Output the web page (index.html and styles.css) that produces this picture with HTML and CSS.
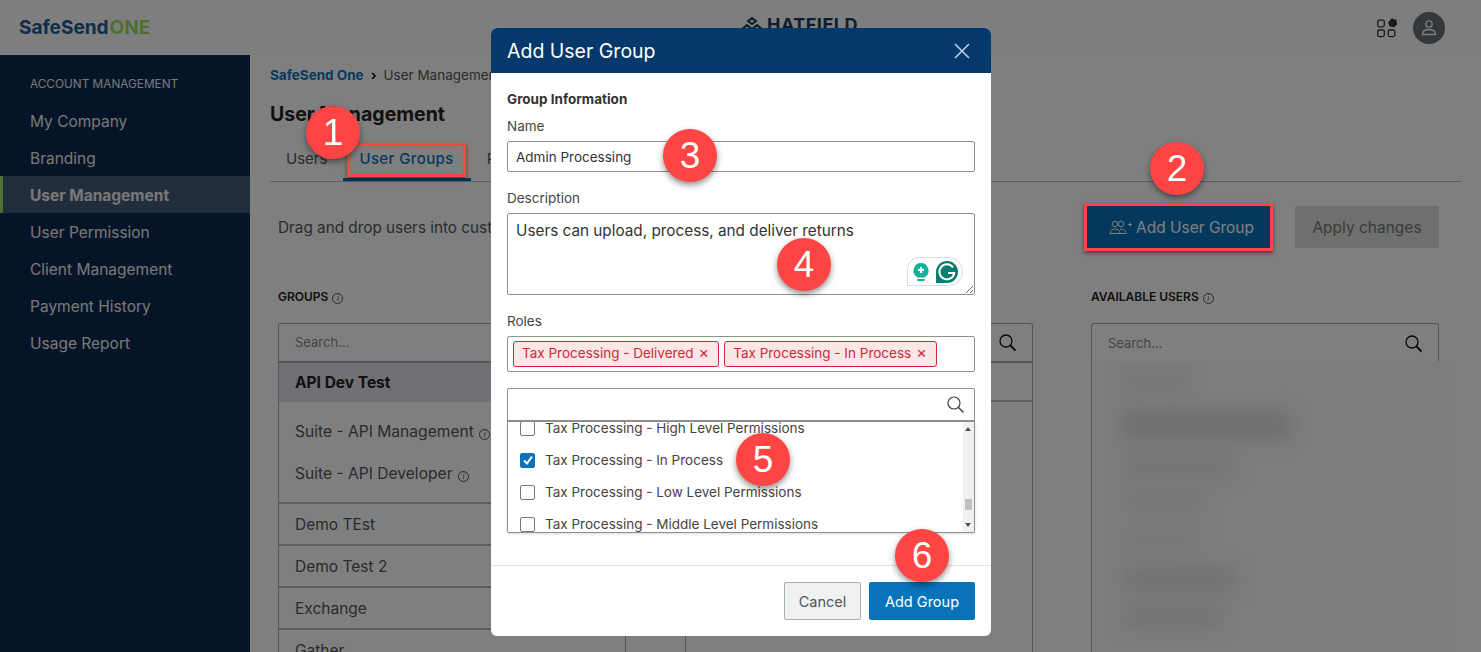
FILE: index.html
```html
<!DOCTYPE html>
<html lang="en">
<head>
    <meta charset="UTF-8">
    <title>Add User Group</title>
    <link rel="stylesheet" href="styles.css">
</head>
<body>
    <header class="topbar">
        <div class="logo">SafeSend<span class="logo-one">ONE</span></div>
        <div class="client">
            <svg class="client-icon" width="24" height="16" viewBox="0 0 24 16" fill="none" stroke="#1c3a5c" stroke-width="2"><path d="M8 5l4-3 4 3-4 3zM2 13l5-4 5 4 5-4 5 4"/></svg>
            HATFIELD
        </div>
        <div class="top-icons">
            <svg width="20" height="20" viewBox="0 0 20 20" fill="none" stroke="#333" stroke-width="1.300">
                <rect x="0.700" y="2.200" width="6.600" height="6.600" rx="1.500"/>
                <rect x="0.700" y="12" width="6.600" height="6.600" rx="1.500"/>
                <rect x="11.200" y="12" width="6.600" height="6.600" rx="1.500"/>
                <path d="M15 1l3.800 1.500.7 3.500-2.500 2.600-3.800-.6-1.400-3.400z" fill="#333"/>
            </svg>
            <div class="avatar">
                <svg width="18" height="18" viewBox="0 0 18 18" fill="none" stroke="#fff" stroke-width="1.300">
                    <circle cx="9" cy="5" r="3.200"/>
                    <path d="M2.500 15.500c0-3.500 3-5 6.500-5s6.500 1.500 6.500 5z"/>
                </svg>
            </div>
        </div>
    </header>

    <div class="layout">
        <nav class="sidebar">
            <div class="side-title">ACCOUNT MANAGEMENT</div>
            <a class="side-link">My Company</a>
            <a class="side-link">Branding</a>
            <a class="side-link active">User Management</a>
            <a class="side-link">User Permission</a>
            <a class="side-link">Client Management</a>
            <a class="side-link">Payment History</a>
            <a class="side-link">Usage Report</a>
        </nav>

        <main class="main">
            <div class="crumbs"><b>SafeSend One</b><span class="crumb-sep">›</span>User Management</div>
            <h1 class="page-title">User Management</h1>
            <div class="tabs">
                <span class="tab">Users</span>
                <span class="tab tab-on">User Groups</span>
                <span class="tab">Roles</span>
            </div>
            <div class="toolbar">
                <p class="hint">Drag and drop users into custom groups to manage them</p>
                <button class="btn-add">
                    <svg width="24" height="16" viewBox="0 0 24 16" fill="none" stroke="#fff" stroke-width="1">
                        <circle cx="6" cy="5" r="2.800"/>
                        <circle cx="12" cy="5" r="2.800"/>
                        <path d="M1 14.500c0-3 2-4.500 5-4.500s5 1.500 5 4.500zM11 10c3 0 6 1 6 4.500h-6"/>
                        <path d="M19 5.500h4M21 3.500v4"/>
                    </svg>
                    Add User Group
                </button>
                <button class="btn-apply">Apply changes</button>
            </div>

            <div class="columns">
                <section class="col">
                    <div class="col-label">GROUPS <i class="info">i</i></div>
                    <div class="box">
                        <div class="search-row">Search...</div>
                        <div class="group-head">API Dev Test</div>
                        <div class="suite">
                            <div class="suite-item">Suite - API Management <i class="info">i</i></div>
                            <div class="suite-item">Suite - API Developer <i class="info">i</i></div>
                        </div>
                        <div class="group-row">Demo TEst</div>
                        <div class="group-row">Demo Test 2</div>
                        <div class="group-row">Exchange</div>
                        <div class="group-row">Gather</div>
                    </div>
                </section>

                <section class="col">
                    <div class="col-label">GROUP MEMBERS <i class="info">i</i></div>
                    <div class="box">
                        <div class="search-row">Search...
                            <svg class="search-icon" width="20" height="20" viewBox="0 0 20 20" fill="none" stroke="#111" stroke-width="1.300"><circle cx="8" cy="8" r="6"/><path d="M12.500 12.500l5 5" stroke-width="1.800"/></svg>
                        </div>
                        <div class="members-head"></div>
                    </div>
                </section>

                <section class="col">
                    <div class="col-label">AVAILABLE USERS <i class="info">i</i></div>
                    <div class="box">
                        <div class="search-row search-plain">Search...
                            <svg class="search-icon" width="20" height="20" viewBox="0 0 20 20" fill="none" stroke="#111" stroke-width="1.300"><circle cx="8" cy="8" r="6"/><path d="M12.500 12.500l5 5" stroke-width="1.800"/></svg>
                        </div>
                        <div class="blur-area">
                            <div class="smudge s1"></div>
                            <div class="smudge s2"></div>
                            <div class="smudge s3"></div>
                            <div class="smudge s4"></div>
                            <div class="smudge s5"></div>
                            <div class="smudge s6"></div>
                            <div class="smudge s7"></div>
                        </div>
                    </div>
                </section>
            </div>
        </main>
    </div>

    <div class="markbox mark-tab"></div>
    <div class="markbox mark-add"></div>

    <div class="overlay"></div>

    <div class="modal">
        <div class="modal-head">
            Add User Group
            <svg width="18" height="18" viewBox="0 0 18 18" stroke="#c8d4e0" stroke-width="1.500"><path d="M2 2l14 14M16 2L2 16"/></svg>
        </div>
        <div class="modal-body">
            <div class="form-title">Group Information</div>
            <label class="field-label">Name</label>
            <input class="text-input" type="text" value="Admin Processing">
            <label class="field-label label-gap">Description</label>
            <div class="area-wrap">
                <textarea class="text-area">Users can upload, process, and deliver returns</textarea>
                <div class="grammarly">
                    <svg width="18" height="20" viewBox="0 0 18 20">
                        <path d="M9 1a7.500 7.500 0 0 1 4.500 13.500l-.5 1H5l-.5-1A7.500 7.500 0 0 1 9 1z" fill="#10b29a"/>
                        <path d="M9 5v6M6 8h6" stroke="#fff" stroke-width="2.200"/>
                        <rect x="5" y="17" width="8" height="2" rx="1" fill="#10b29a"/>
                    </svg>
                    <svg width="22" height="22" viewBox="0 0 22 22">
                        <path d="M11 0a11 11 0 0 1 0 22H0V11A11 11 0 0 1 11 0z" fill="#027e6f"/>
                        <path d="M17 6.500A7.500 7.500 0 1 0 18.300 12H12" fill="none" stroke="#fff" stroke-width="2"/>
                    </svg>
                </div>
            </div>
            <label class="field-label label-gap">Roles</label>
            <div class="role-box">
                <span class="role-tag">Tax Processing - Delivered<span class="tag-x">×</span></span>
                <span class="role-tag">Tax Processing - In Process<span class="tag-x">×</span></span>
            </div>
            <div class="role-search">
                <svg width="20" height="20" viewBox="0 0 20 20" fill="none" stroke="#444" stroke-width="1.200"><circle cx="8" cy="8" r="6"/><path d="M12.500 12.500l5 5" stroke-width="1.600"/></svg>
            </div>
            <div class="role-list">
                <div class="role-items">
                    <div class="role-item"><span class="check"></span>Tax Processing - High Level Permissions</div>
                    <div class="role-item"><span class="check check-on"><svg width="12" height="12" viewBox="0 0 12 12" fill="none" stroke="#fff" stroke-width="2"><path d="M2 6.500l3 3 5-7"/></svg></span>Tax Processing - In Process</div>
                    <div class="role-item"><span class="check"></span>Tax Processing - Low Level Permissions</div>
                    <div class="role-item"><span class="check"></span>Tax Processing - Middle Level Permissions</div>
                </div>
                <div class="scroll">
                    <span class="arrow-up"></span>
                    <span class="thumb"></span>
                    <span class="arrow-down"></span>
                </div>
            </div>
        </div>
        <div class="modal-foot">
            <button class="btn-cancel">Cancel</button>
            <button class="btn-save">Add Group</button>
        </div>
    </div>

    <div class="step step-1">1</div>
    <div class="step step-2">2</div>
    <div class="step step-3">3</div>
    <div class="step step-4">4</div>
    <div class="step step-5">5</div>
    <div class="step step-6">6</div>
</body>
</html>
```

FILE: styles.css
```css
* {
    box-sizing: border-box;
}
html, body {
    height: 100%;
}
body {
    margin: 0;
    overflow: hidden;
    font-family: Inter, "Liberation Sans", sans-serif;
    font-size: 15px;
    color: #565656;
    background-color: #fff;
}

/* top bar */
.topbar {
    height: 55px;
    display: flex;
    align-items: center;
    justify-content: space-between;
    padding: 0 36px 0 19px;
    background-color: #fdfdfd;
}
.logo {
    font-size: 19px;
    font-weight: 700;
    color: #1c5a94;
    width: 300px;
}
.logo-one {
    color: #98e060;
    margin-left: 1px;
}
.client {
    display: flex;
    align-items: center;
    gap: 3px;
    margin: -7px 0 0 -98px;
    font-size: 18px;
    font-weight: 700;
    letter-spacing: 0.5px;
    color: #1c3a5c;
}
.top-icons {
    display: flex;
    align-items: center;
    gap: 16px;
}
.avatar {
    width: 32px;
    height: 32px;
    border-radius: 50%;
    background-color: #6a7074;
    display: flex;
    align-items: center;
    justify-content: center;
}

/* sidebar */
.layout {
    display: flex;
    height: calc(100% - 55px);
}
.sidebar {
    width: 250px;
    flex-shrink: 0;
    background-color: #0c2850;
    padding-top: 19px;
}
.side-title {
    font-size: 11.800px;
    line-height: 20px;
    padding-left: 30px;
    margin-bottom: 8px;
    color: #f0f0f0;
}
.side-link {
    display: block;
    height: 37px;
    line-height: 39px;
    padding-left: 30px;
    font-size: 15.500px;
    color: #f0f0f0;
}
.side-link.active {
    font-weight: 700;
    padding-left: 27px;
    background-color: #445a76;
    border-left: 3px solid #9ee066;
}

/* main part */
.main {
    flex: 1;
    padding: 0 20px;
    min-width: 0;
}
.crumbs {
    height: 40px;
    line-height: 40px;
    font-size: 13.500px;
}
.crumbs b {
    color: #0973ba;
}
.crumb-sep {
    margin: 0 7px;
    font-weight: 700;
    color: #111;
}
.page-title {
    margin: 0;
    height: 45px;
    line-height: 39px;
    font-size: 19.500px;
    font-weight: 700;
    color: #222;
}
.tabs {
    display: flex;
    height: 42px;
    border-bottom: 1px solid #bbb;
}
.tab {
    padding: 0 16px;
    line-height: 38px;
}
.tab-on {
    color: #0973ba;
    font-weight: 500;
    letter-spacing: 0.400px;
    padding-right: 17px;
    border-bottom: 3px solid #0973ba;
    height: 41px;
}
.toolbar {
    display: flex;
    align-items: center;
    gap: 25px;
    height: 42px;
    margin-top: 24px;
    padding: 0 22px 0 8px;
}
.hint {
    margin: 0;
    flex: 1;
    font-size: 15.300px;
    white-space: nowrap;
    overflow: hidden;
}
.btn-add {
    width: 183px;
    height: 42px;
    display: flex;
    flex-shrink: 0;
    align-items: center;
    justify-content: center;
    gap: 3px;
    padding: 0 0 0 6px;
    border: 0;
    font: inherit;
    font-size: 15.500px;
    color: #fff;
    background-color: #0973ba;
}
.btn-apply {
    width: 144px;
    height: 42px;
    flex-shrink: 0;
    border: 0;
    border-radius: 2px;
    font: inherit;
    font-size: 15.500px;
    color: #777;
    background-color: #dde0dd;
}
.columns {
    display: flex;
    justify-content: space-between;
    padding: 0 22px 0 8px;
    margin-top: 39px;
}
.col {
    width: 348px;
}
.col-label {
    height: 36px;
    line-height: 20px;
    font-size: 12px;
    font-weight: 600;
    color: #222;
}
.info {
    display: inline-block;
    width: 11px;
    height: 11px;
    margin-left: 1px;
    border: 1px solid #555;
    border-radius: 50%;
    font-size: 8px;
    font-weight: 400;
    line-height: 9px;
    text-align: center;
    vertical-align: 0;
    color: #555;
}
.box {
    border: 1px solid #aaa;
    border-bottom: 0;
    border-radius: 3px 3px 0 0;
    height: 400px;
}
.search-row {
    height: 39px;
    line-height: 37px;
    padding: 0 16px;
    font-size: 13px;
    color: #8a8a8a;
    display: flex;
    align-items: center;
    justify-content: space-between;
    border-bottom: 2px solid #aaa;
}
.search-plain {
    border-bottom: 0;
}
.search-icon {
    margin-right: -2px;
}
.group-head {
    height: 39px;
    line-height: 39px;
    padding-left: 16px;
    font-size: 15.500px;
    font-weight: 700;
    color: #222;
    background-color: #dfe2e8;
}
.suite {
    height: 102px;
    padding-top: 9px;
    border-bottom: 2px solid #bbb;
}
.suite-item {
    height: 42px;
    line-height: 42px;
    padding-left: 16px;
    font-size: 15.600px;
}
.group-row {
    height: 42px;
    line-height: 42px;
    padding-left: 16px;
    font-size: 15.500px;
    border-bottom: 2px solid #bbb;
}
.members-head {
    height: 39px;
    border-bottom: 2px solid #bbb;
}
.blur-area {
    height: 370px;
    margin: -2px -12px 0 0;
    padding: 10px 0 0 30px;
    overflow: hidden;
    background-color: #f8fbf8;
}
.smudge {
    height: 20px;
    margin-bottom: 20px;
    background-color: #e8eae8;
    filter: blur(10px);
}
.s1 { width: 70px; }
.s2 { width: 170px; height: 28px; margin-bottom: 12px; background-color: #dcdedc; }
.s3 { width: 115px; height: 28px; margin-bottom: 12px; }
.s4 { width: 85px; }
.s5 { width: 80px; height: 16px; margin-bottom: 20px; }
.s6 { width: 115px; height: 24px; margin-bottom: 16px; background-color: #e2e4e2; }
.s7 { width: 100px; background-color: #e2e4e2; }

/* red boxes of the tutorial */
.markbox {
    position: absolute;
    z-index: 2;
    border: 3px solid #ff4444;
    box-shadow: 0 2px 4px rgba(0, 0, 0, 0.5);
}
.mark-tab {
    left: 347px;
    top: 143px;
    width: 119px;
    height: 34px;
}
.mark-add {
    left: 1084px;
    top: 203px;
    width: 189px;
    height: 48px;
}

.overlay {
    position: fixed;
    top: 0;
    left: 0;
    width: 100%;
    height: 100%;
    background-color: rgba(0, 0, 0, 0.5);
}

/* modal */
.modal {
    position: fixed;
    z-index: 3;
    top: 28px;
    left: 491px;
    width: 500px;
    height: 608px;
    display: flex;
    flex-direction: column;
    background-color: #fff;
    border-radius: 6px;
    overflow: hidden;
}
.modal-head {
    height: 45px;
    flex-shrink: 0;
    display: flex;
    align-items: center;
    justify-content: space-between;
    padding: 0 20px 0 16px;
    font-size: 19.500px;
    font-weight: 400;
    color: #fff;
    background-color: #05386b;
}
.modal-body {
    flex: 1;
    padding: 16px 16px 0;
    font-size: 13.500px;
}
.form-title {
    height: 20px;
    line-height: 20px;
    font-weight: 700;
    color: #333;
}
.field-label {
    display: block;
    height: 20px;
    line-height: 20px;
    margin: 7px 0 5px;
    color: #444;
}
.label-gap {
    margin-top: 16px;
}
.text-input {
    display: block;
    width: 100%;
    height: 31px;
    padding: 0 8px;
    border: 1px solid #8f8f8f;
    border-radius: 2px;
    font: inherit;
    color: #333;
}
.area-wrap {
    position: relative;
    height: 82px;
}
.text-area {
    display: block;
    width: 100%;
    height: 82px;
    padding: 7px 8px;
    border: 1px solid #8f8f8f;
    border-radius: 2px;
    font: inherit;
    font-size: 15.300px;
    color: #333;
}
.grammarly {
    position: absolute;
    right: 12px;
    bottom: 9px;
    width: 56px;
    height: 29px;
    display: flex;
    align-items: center;
    justify-content: center;
    gap: 6px;
    border: 1px solid #d5dae5;
    border-radius: 12px 14px 14px 0;
    background-color: #fff;
}
.role-box {
    height: 36px;
    display: flex;
    align-items: center;
    gap: 5px;
    padding-left: 5px;
    border: 1px solid #8f8f8f;
    border-radius: 2px;
}
.role-tag {
    height: 26px;
    line-height: 22px;
    padding: 0 9px 0 8px;
    border: 1px solid #cc2a36;
    border-radius: 3px;
    color: #cc2a36;
    background-color: #fbe6e8;
    white-space: nowrap;
}
.tag-x {
    margin-left: 5px;
    font-size: 16px;
    line-height: 1;
}
.role-search {
    height: 34px;
    margin-top: 16px;
    display: flex;
    align-items: center;
    justify-content: flex-end;
    padding-right: 8px;
    border: 1px solid #8f8f8f;
    border-bottom-width: 2px;
    border-radius: 2px 2px 0 0;
}
.role-list {
    display: flex;
    height: 111px;
    overflow: hidden;
    border: 1px solid #8f8f8f;
    border-top: 0;
    border-radius: 0 0 2px 2px;
    box-shadow: 0 1px 3px rgba(0, 0, 0, 0.15);
}
.role-items {
    flex: 1;
    margin-top: -10px;
    padding-left: 12px;
    color: #444;
}
.role-item {
    display: flex;
    align-items: center;
    gap: 10px;
    height: 32px;
}
.check {
    width: 15px;
    height: 15px;
    display: flex;
    align-items: center;
    justify-content: center;
    border: 1px solid #777;
    border-radius: 2px;
}
.check-on {
    border-color: #0973ba;
    background-color: #0973ba;
}
.scroll {
    position: relative;
    width: 11px;
    background-color: #f1f1f1;
}
.arrow-up, .arrow-down {
    position: absolute;
    left: 2px;
    border-left: 3.500px solid transparent;
    border-right: 3.500px solid transparent;
}
.arrow-up {
    top: 5px;
    border-bottom: 4px solid #505050;
}
.arrow-down {
    bottom: 5px;
    border-top: 4px solid #505050;
}
.thumb {
    position: absolute;
    left: 2px;
    top: 77px;
    width: 7px;
    height: 11px;
    background-color: #c1c1c1;
}
.modal-foot {
    height: 71px;
    display: flex;
    justify-content: flex-end;
    gap: 8px;
    padding: 16px 16px 0;
    border-top: 1px solid #e2e2e2;
}
.btn-cancel, .btn-save {
    height: 38px;
    font: inherit;
    font-size: 14.500px;
    border-radius: 2px;
}
.btn-cancel {
    width: 77px;
    border: 1px solid #aab0aa;
    color: #555;
    background-color: #f0f1f1;
}
.btn-save {
    width: 106px;
    border: 0;
    color: #fff;
    background-color: #0973ba;
}

/* numbered circles of the tutorial */
.step {
    position: fixed;
    z-index: 4;
    width: 54px;
    height: 53px;
    border-radius: 50%;
    display: flex;
    align-items: center;
    justify-content: center;
    font-family: "Liberation Sans", Arial, sans-serif;
    font-size: 37px;
    color: #fff;
    background-color: #ff4444;
    box-shadow: 0 3px 6px rgba(0, 0, 0, 0.45);
}
.step-1 { left: 306px; top: 106px; }
.step-2 { left: 1150px; top: 142px; }
.step-3 { left: 663px; top: 129px; }
.step-4 { left: 777px; top: 238px; }
.step-5 { left: 736px; top: 433px; }
.step-6 { left: 895px; top: 529px; }
```
